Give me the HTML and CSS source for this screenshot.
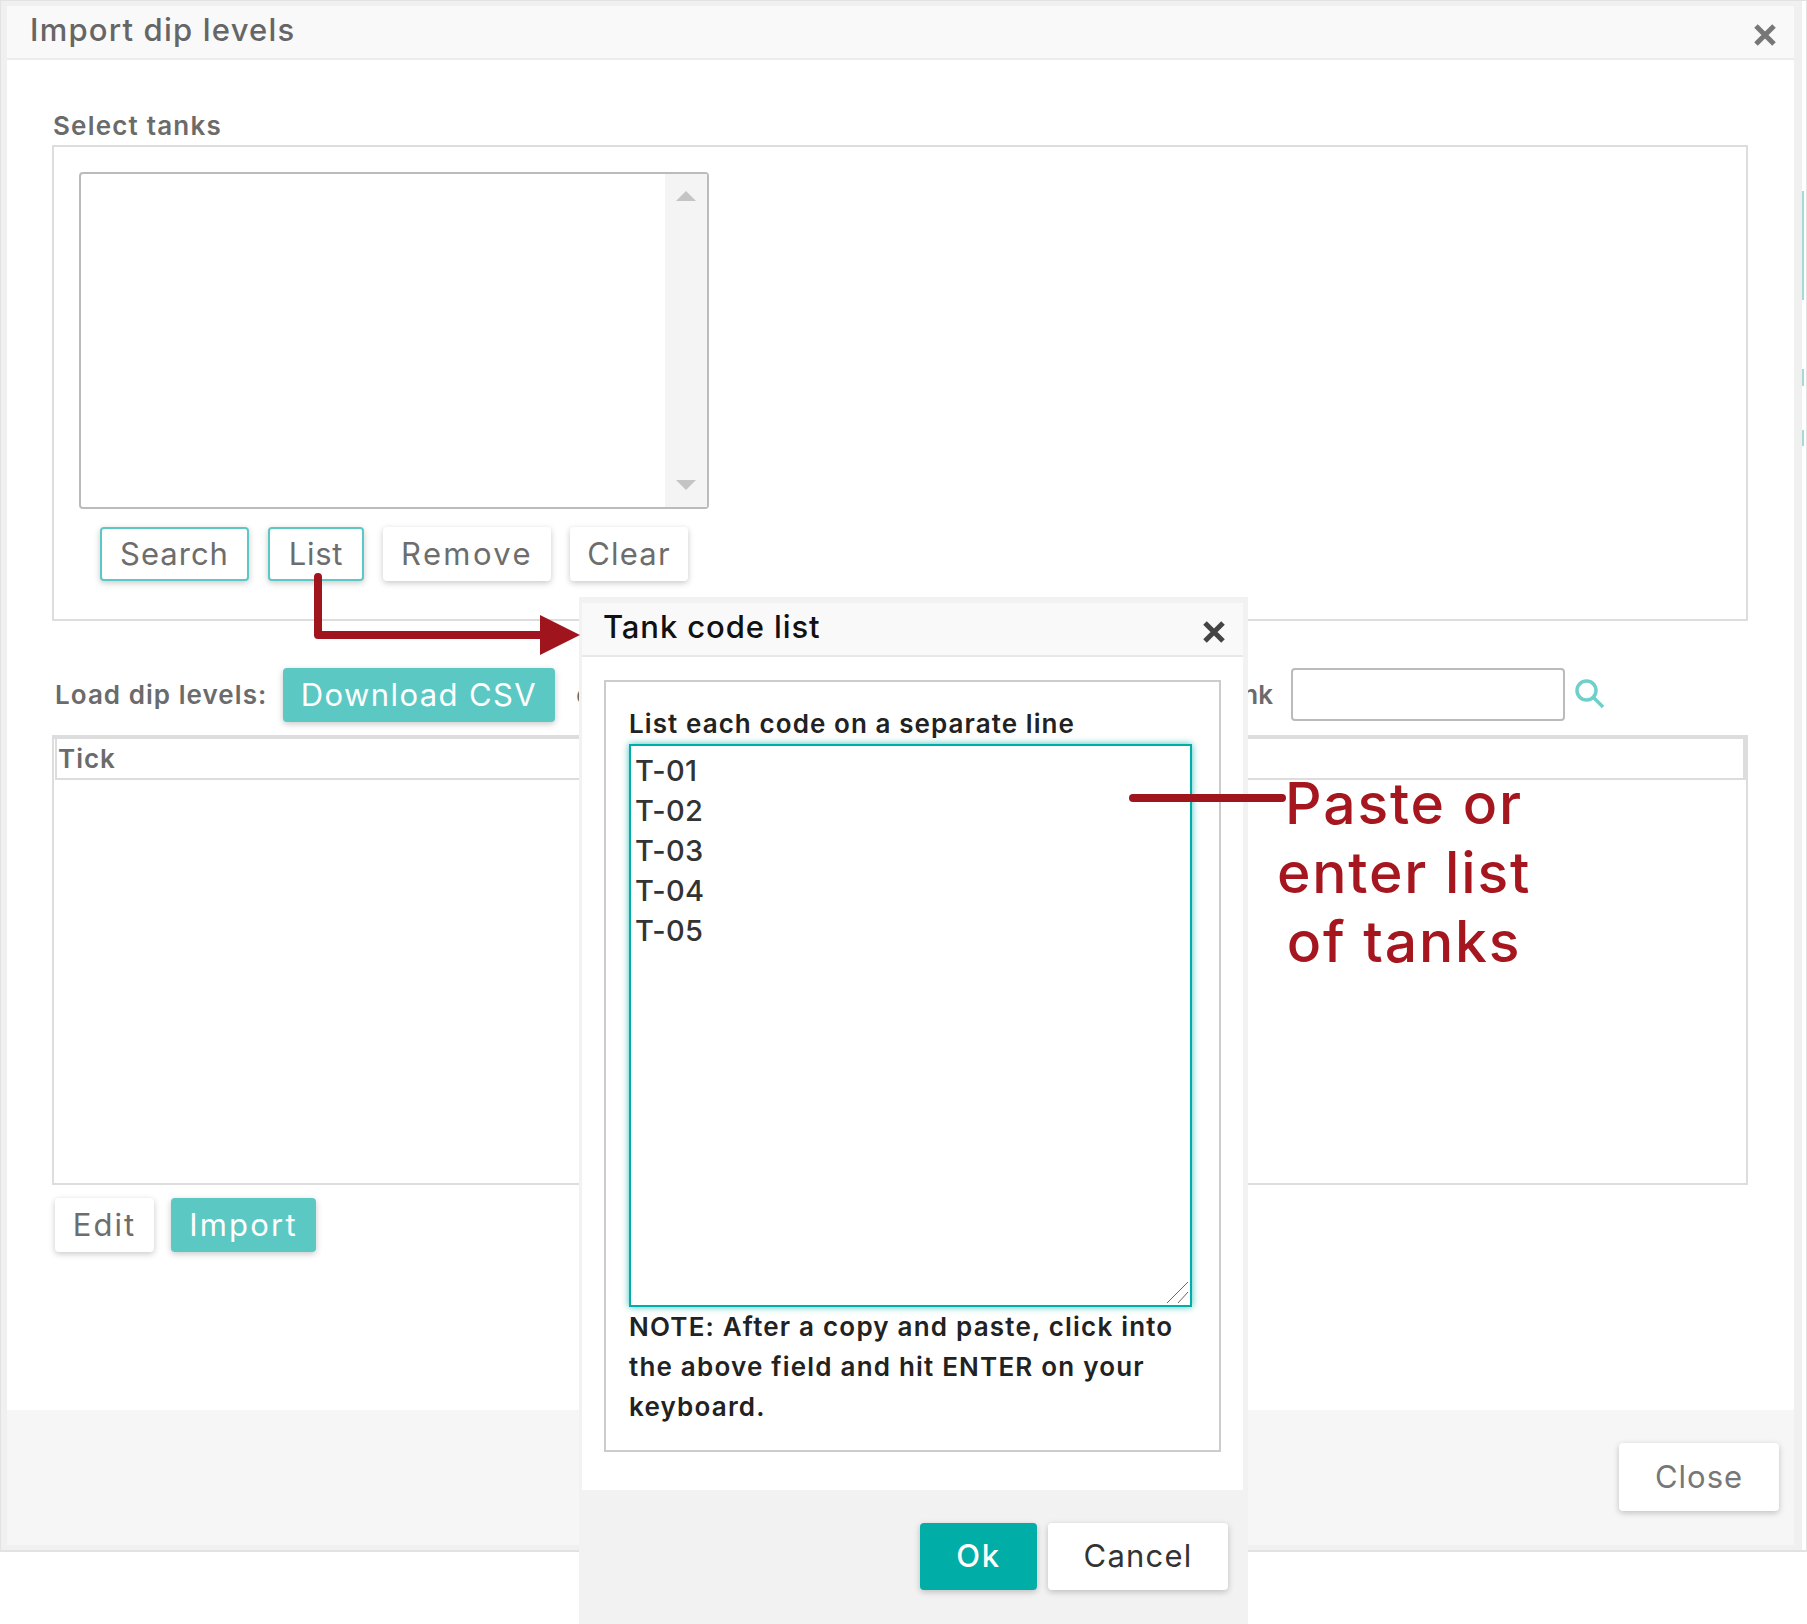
FILE: index.html
```html
<!DOCTYPE html>
<html lang="en">
<head>
<meta charset="utf-8">
<title>Import dip levels</title>
<link rel="stylesheet" href="styles.css">
</head>
<body>
<div class="stage">
  <section class="modal">
    <div class="modal-inner">
      <header class="modal-head">
        <h1 class="modal-title">Import dip levels</h1>
        <svg class="close-x" viewBox="0 0 24 24" width="24" height="24"><path d="M3 3 21 21M21 3 3 21"/></svg>
      </header>
      <div class="modal-body">
        <div class="section-label">Select tanks</div>
        <div class="tank-box">
          <div class="listbox">
            <div class="listbox-items"></div>
            <div class="scroller">
              <span class="tri tri-up"></span>
              <span class="tri tri-down"></span>
            </div>
          </div>
          <div class="btn-row">
            <button class="btn btn-outline btn-search">Search</button>
            <button class="btn btn-outline btn-list">List</button>
            <button class="btn btn-remove">Remove</button>
            <button class="btn btn-clear">Clear</button>
          </div>
        </div>
        <div class="load-row">
          <span class="load-label">Load dip levels:</span>
          <button class="btn btn-teal btn-csv">Download CSV</button>
          <span class="load-or">or</span>
          <span class="load-find">Search tank</span>
          <input class="find-input" type="text">
          <svg class="find-icon" viewBox="0 0 30 30" width="30" height="30"><circle cx="11.5" cy="11.5" r="9.5"/><path d="M18.5 18.5 28 28"/></svg>
        </div>
        <div class="grid">
          <div class="grid-head">Tick</div>
        </div>
        <div class="grid-actions">
          <button class="btn btn-edit">Edit</button>
          <button class="btn btn-teal btn-import">Import</button>
        </div>
      </div>
      <footer class="modal-foot">
        <button class="btn btn-close">Close</button>
      </footer>
    </div>
    <div class="edge">
      <span class="edge-mark edge-a"></span>
      <span class="edge-mark edge-b"></span>
      <span class="edge-mark edge-c"></span>
    </div>
  </section>

  <section class="popup">
    <header class="popup-head">
      <h2 class="popup-title">Tank code list</h2>
      <svg class="popup-x" viewBox="0 0 24 24" width="24" height="24"><path d="M3 3 21 21M21 3 3 21"/></svg>
    </header>
    <div class="popup-body">
      <div class="popup-box">
        <label class="popup-label" for="codes">List each code on a separate line</label>
        <div class="codes-wrap">
          <textarea class="codes" id="codes">T-01
T-02
T-03
T-04
T-05</textarea>
          <svg class="resizer" viewBox="0 0 21 21" width="21" height="21"><path d="M0 21 21 0M11 21 21 10"/></svg>
        </div>
        <p class="popup-note">NOTE: After a copy and paste, click into the above field and hit ENTER on your keyboard.</p>
      </div>
    </div>
    <footer class="popup-foot">
      <button class="btn btn-ok">Ok</button>
      <button class="btn btn-cancel">Cancel</button>
    </footer>
  </section>

  <svg class="callouts" viewBox="0 0 1807 1624" width="1807" height="1624">
    <path class="callout-line" d="M318 577V635H545"/>
    <path class="callout-head" d="M540 615 580 635 540 655Z"/>
    <path class="callout-line" d="M1133 798H1282"/>
  </svg>
  <div class="callout-text">Paste or<br>enter list<br>of tanks</div>
</div>
</body>
</html>
```

FILE: styles.css
```css
* { box-sizing: border-box; }
html, body { margin: 0; padding: 0; background: #fff; }
body { font-family: Inter, "Open Sans", sans-serif; }
.stage { position: relative; width: 1807px; height: 1624px; overflow: hidden; }

.modal { display: flex; height: 1552px; border: 2px solid #e2e2e2; border-width: 1px 1px 2px 1px; background: #fff; }
.modal-inner { width: 1800px; flex: none; display: flex; flex-direction: column; background: #fff; border: solid #f0f0f0; border-width: 5px 7px 5px 6px; }
.edge { flex: 1; position: relative; border-left: 1px solid #eee; }
.edge-mark { position: absolute; left: 0; width: 2px; background: #a9d9d6; }
.edge-a { top: 190px; height: 109px; }
.edge-b { top: 368px; height: 17px; }
.edge-c { top: 429px; height: 16px; }

.modal-head { height: 54px; flex: none; display: flex; justify-content: space-between; background: #f9f9f9; border-bottom: 2px solid #ececec; padding-left: 23px; }
.modal-title { margin: 6px 0 0; font-size: 31px; letter-spacing: 1.2px; line-height: 36px; font-weight: 500; color: #666; }
.close-x { margin: 17px 17px 0 0; }
.close-x path { stroke: #777; stroke-width: 5; fill: none; }

.modal-body { height: 1350px; flex: none; padding: 47px 46px 0 45px; }
.section-label { padding-left: 1px; font-size: 26px; letter-spacing: 1.2px; font-weight: 600; line-height: 38px; color: #6b6b6b; }
.tank-box { height: 476px; border: 2px solid #ddd; padding: 25px 25px; }
.listbox { width: 630px; height: 337px; display: flex; border: 2px solid #bbb; border-radius: 4px; }
.listbox-items { flex: 1; }
.scroller { width: 42px; background: #f4f4f4; position: relative; }
.tri { position: absolute; left: 11px; width: 0; height: 0; border-left: 10px solid transparent; border-right: 10px solid transparent; }
.tri-up { top: 17px; border-bottom: 10px solid #c4c4c4; }
.tri-down { bottom: 17px; border-top: 10px solid #c4c4c4; }

.btn { display: inline-flex; align-items: center; justify-content: center; padding: 0; border: 0; border-radius: 4px; background: #fff; color: #6d6d6d; font-family: inherit; font-size: 31px; box-shadow: 0 2px 6px rgba(0,0,0,.22); }
.btn-row { display: flex; gap: 19px; margin: 18px 0 0 21px; }
.btn-row .btn { height: 54px; padding-bottom: 1px; }
.btn-outline { border: 2px solid #5cc8c3; }
.btn-search { width: 149px; letter-spacing: 1px; }
.btn-list { width: 96px; letter-spacing: .75px; }
.btn-remove { width: 168px; letter-spacing: 2.4px; }
.btn-clear { width: 118px; letter-spacing: 1.2px; }
.btn-teal { background: #5cc8c3; color: #fff; }

.load-row { display: flex; align-items: center; height: 54px; margin-top: 47px; padding-left: 3px; }
.load-label { font-size: 26px; letter-spacing: 1.05px; font-weight: 600; color: #6b6b6b; width: 228px; flex: none; padding-bottom: 2px; }
.btn-csv { width: 272px; height: 54px; flex: none; letter-spacing: 1.4px; padding-bottom: 2px; }
.load-or { font-size: 26px; color: #6b6b6b; margin-left: 21px; padding-bottom: 2px; }
.load-find { margin-left: auto; font-size: 26px; font-weight: 600; color: #6b6b6b; margin-right: 18px; padding-bottom: 2px; }
.find-input { width: 274px; height: 53px; margin-bottom: 2px; border: 2px solid #bbb; border-radius: 4px; background: #fff; outline: 0; }
.find-icon { margin: 0 143px 2px 10px; }
.find-icon circle, .find-icon path { fill: none; stroke: #6fd0cb; stroke-width: 3.5; }

.grid { height: 450px; margin-top: 13px; border: 2px solid #ddd; border-top-width: 4px; }
.grid-head { height: 41px; margin-left: 1px; padding-left: 1px; border: solid #ddd; border-width: 0 3px 2px 2px; font-size: 26px; letter-spacing: 1px; font-weight: 600; line-height: 40px; color: #6b6b6b; }
.grid-actions { display: flex; gap: 17px; margin: 13px 0 0 3px; }
.grid-actions .btn { height: 54px; padding-bottom: 2px; }
.btn-edit { width: 99px; letter-spacing: 2px; }
.btn-import { width: 145px; letter-spacing: 2.2px; }

.modal-foot { height: 135px; flex: none; display: flex; justify-content: flex-end; padding: 33px 15px 0 0; background: #f6f6f6; }
.btn-close { width: 160px; height: 68px; padding-bottom: 2px; color: #777; letter-spacing: 1px; }

.popup { position: absolute; left: 579px; top: 597px; width: 669px; height: 1027px; display: flex; flex-direction: column; background: #f2f2f2; padding: 6px 5px 0 3px; }
.popup-head { height: 54px; flex: none; display: flex; justify-content: space-between; background: #f9f9f9; border-bottom: 2px solid #e8e8e8; padding-left: 21px; }
.popup-title { margin: 6px 0 0; font-size: 31px; letter-spacing: .9px; line-height: 36px; font-weight: 500; color: #111; }
.popup-x { margin: 17px 17px 0 0; }
.popup-x path { stroke: #444; stroke-width: 5; fill: none; }
.popup-body { height: 833px; flex: none; background: #fff; padding: 23px 22px 0; }
.popup-box { height: 772px; border: 2px solid #ccc; padding: 25px 25px 0 23px; }
.popup-label { display: block; font-size: 26px; letter-spacing: 1.08px; font-weight: 600; line-height: 34px; color: #222; margin-right: -10px; }
.codes-wrap { position: relative; width: 563px; height: 563px; margin-top: 3px; }
.codes { display: block; width: 100%; height: 100%; resize: none; border: 2px solid #00ada7; outline: 0; box-shadow: 0 0 7px rgba(0,173,167,.75); padding: 5px 4px; background: #fff; font-family: inherit; font-size: 29px; letter-spacing: .3px; font-weight: 500; line-height: 40px; color: #333; overflow: hidden; }
.resizer { position: absolute; right: 4px; bottom: 4px; }
.resizer path { stroke: #666; stroke-width: 1; fill: none; }
.popup-note { margin: 0; padding-top: 0; font-size: 26px; letter-spacing: 1.2px; font-weight: 600; line-height: 40px; color: #222; }
.popup-foot { flex: 1; display: flex; justify-content: flex-end; align-items: flex-start; gap: 11px; padding: 33px 15px 0 0; background: #f2f2f2; }
.popup-foot .btn { height: 67px; padding-bottom: 2px; }
.btn-ok { width: 117px; background: #00ada7; color: #fff; font-weight: 500; letter-spacing: 1.7px; }
.btn-cancel { width: 180px; color: #333; letter-spacing: 1.2px; }

.callouts { position: absolute; left: 0; top: 0; pointer-events: none; }
.callout-line { fill: none; stroke: #a0141e; stroke-width: 8; stroke-linecap: round; stroke-linejoin: round; }
.callout-head { fill: #a0141e; }
.callout-text { position: absolute; left: 1234px; top: 769px; width: 340px; text-align: center; font-size: 57px; letter-spacing: 1.8px; font-weight: 500; line-height: 69px; color: #a5161f; }
```
